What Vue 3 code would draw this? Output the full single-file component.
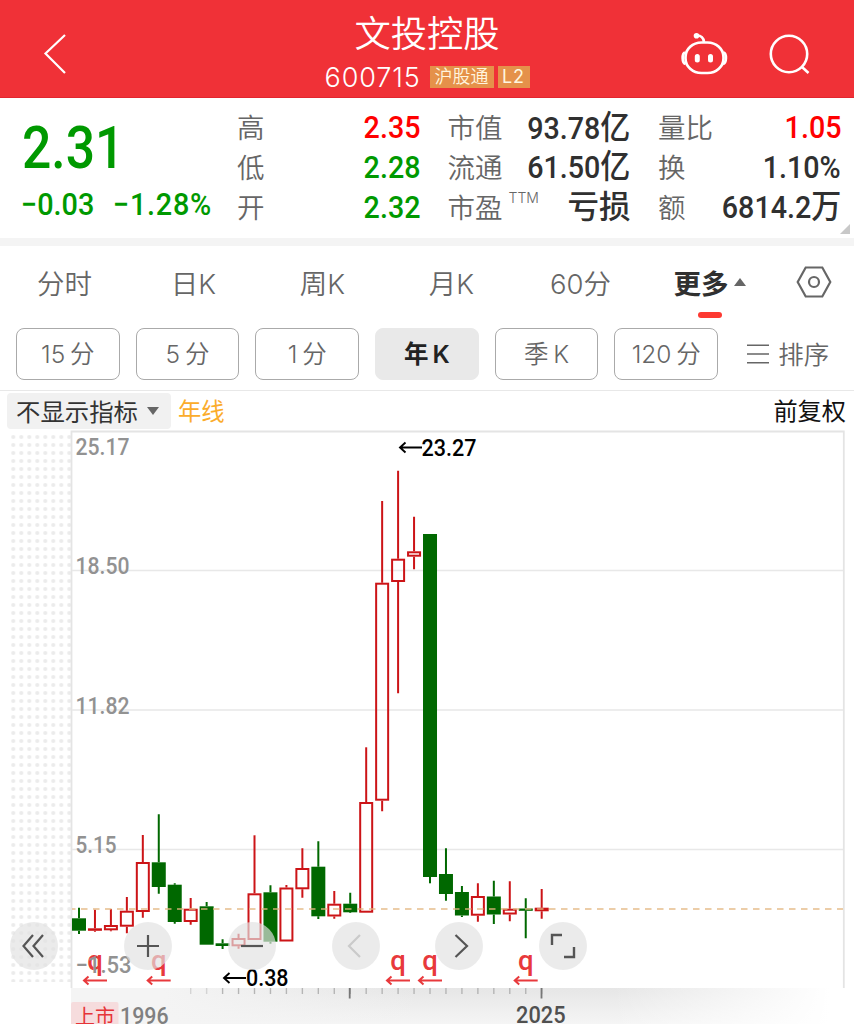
<template>
  <div class="page">
    <header class="header">
      <svg class="icon-back" viewBox="0 0 24 42">
        <path d="M22 2 L2.5 20.5 L22 40" />
      </svg>
      <div class="title">
        <h1>文投控股</h1>
        <div class="code">
          <span class="code-number">600715</span>
          <span class="badge">沪股通</span>
          <span class="badge badge-l2">L2</span>
        </div>
      </div>
      <div class="header-icons">
        <svg class="icon-robot" viewBox="0 0 48 44">
          <rect x="5.500" y="10.500" width="38" height="30.500" rx="16" ry="14.500" />
          <path d="M5 20.500 C1.800 21.500 1.800 31 5.500 32 M43.500 20.500 C46.800 21.500 46.800 31 43 32" />
          <path d="M17 3.500 C21 3.500 23.500 6 24 10" />
          <circle class="solid" cx="16.500" cy="3.700" r="2.800" />
          <path class="eyes" d="M17.300 24.500 V28 M30.500 24.500 V28" />
        </svg>
        <svg class="icon-search" viewBox="0 0 42 42">
          <circle cx="20" cy="20" r="18.200" />
          <path d="M33 33 L39.500 39" />
        </svg>
      </div>
    </header>

    <section class="quote">
      <div class="quote-main">
        <div class="price">2.31</div>
        <div class="change">
          <span>−0.03</span>
          <span class="percent">−1.28%</span>
        </div>
      </div>
      <div class="quote-grid">
        <div class="quote-item" v-for="item in quotes" :key="item.label">
          <span class="label">{{ item.label }}<sup v-if="item.sup">{{ item.sup }}</sup></span>
          <span class="value" :class="item.type">{{ item.value }}<i v-if="item.unit">{{ item.unit }}</i></span>
        </div>
      </div>
      <span class="corner"></span>
    </section>

    <nav class="tabs">
      <span class="tab" v-for="tab in tabs" :key="tab">{{ tab }}</span>
      <span class="tab active">更多<i class="arrow-up"></i></span>
      <svg class="icon-setting" viewBox="0 0 36 32">
        <path d="M9.700 1.500 H26.300 L34.300 16 L26.300 30.500 H9.700 L1.700 16 Z" />
        <circle cx="18" cy="16" r="5" />
      </svg>
    </nav>

    <div class="periods">
      <button v-for="period in periods" :key="period" class="period" :class="{ selected: period === current }"
        @click="current = period">{{ period }}</button>
      <div class="sort">
        <svg viewBox="0 0 22 20">
          <path d="M0 1.200 H22 M0 10 H22 M0 18.800 H22" />
        </svg>
        <span>排序</span>
      </div>
    </div>

    <div class="indicator">
      <div class="indicator-select">不显示指标<i class="arrow-down"></i></div>
      <span class="line-name">年线</span>
      <span class="adjust">前复权</span>
    </div>

    <div class="chart">
      <svg class="chart-svg" viewBox="0 430 854 594">
        <defs>
          <pattern id="dots" x="9.300" y="433" width="8" height="8" patternUnits="userSpaceOnUse">
            <circle cx="4" cy="4" r="2" fill="#ebebeb" />
          </pattern>
          <linearGradient id="axisDown" x1="0" y1="0" x2="0" y2="1">
            <stop offset="0" stop-color="#e6e6e6" />
            <stop offset="1" stop-color="#f5f5f5" />
          </linearGradient>
          <linearGradient id="axisLeft" x1="0" y1="0" x2="1" y2="0">
            <stop offset="0" stop-color="#f4f4f4" />
            <stop offset="0.120" stop-color="#f4f4f4" />
            <stop offset="0.450" stop-color="#f4f4f4" stop-opacity="0" />
            <stop offset="0.700" stop-color="#fff" stop-opacity="0" />
            <stop offset="0.980" stop-color="#fff" />
          </linearGradient>
        </defs>

        <rect x="9" y="433" width="62" height="549" fill="url(#dots)" />
        <rect x="71" y="988" width="773" height="36" fill="url(#axisDown)" />
        <rect x="71" y="988" width="774" height="36" fill="url(#axisLeft)" />

        <!-- grid -->
        <path class="frame" d="M71.500 988 V431.500 H843.800 V988" />
        <path class="grid" d="M72 570.500 H843 M72 710 H843 M72 849.500 H843" />

        <!-- candles -->
        <g v-for="(c, i) in candles" :key="i" :class="c[0] ? 'rise' : 'fall'">
          <path :d="wick(c, i)" />
          <rect :x="centerX(i) - (c[0] ? 6 : 7)" :y="c[0] ? c[2] + 1 : c[2]" :width="c[0] ? 12 : 14"
            :height="c[0] ? Math.max(c[3] - c[2] - 2, 0.5) : c[3] - c[2]" />
        </g>
        <path class="current" d="M72 909 H843" />

        <g v-for="x in dividends" :key="x" class="dividend">
          <text :x="x" y="970">q</text>
          <path :d="`M${x + 12} 980.500 H${x - 11} M${x - 6.500} 976.500 L${x - 11} 980.500 L${x - 6.500} 984.500`" />
        </g>

        <text v-for="p in prices" :key="p.text" class="scale" x="75.500" :y="p.y" :textLength="p.width"
          lengthAdjust="spacingAndGlyphs">{{ p.text }}</text>

        <g class="extreme">
          <path d="M422 447.500 H400 M405.500 442.500 L400 447.500 L405.500 452.500" />
          <text x="421.500" y="456" textLength="55" lengthAdjust="spacingAndGlyphs">23.27</text>
          <path d="M246 978 H224 M229.500 973 L224 978 L229.500 983" />
          <text x="246" y="986.300" textLength="42.500" lengthAdjust="spacingAndGlyphs">0.38</text>
        </g>

        <path v-for="n in 23" :key="n" class="tick" :class="{ light: n < 3 }"
          :d="`M${centerX(n + 6)} 988 v6`" />
        <path class="tick-major" d="M349.700 988 v10.500 M541.500 988 v10.500" />

        <rect x="71" y="1002" width="47.500" height="26" rx="2" fill="#f6dcdd" />
        <text class="listed" x="75" y="1024">上市</text>
        <text class="year" x="120" y="1023.500" textLength="48.500" lengthAdjust="spacingAndGlyphs">1996</text>
        <text class="year last" x="516" y="1023" textLength="49.500" lengthAdjust="spacingAndGlyphs">2025</text>
      </svg>

      <div class="tools">
        <button v-for="tool in tools" :key="tool.name" class="tool" :class="tool.name">
          <svg viewBox="0 0 48 48">
            <path :d="tool.path" />
          </svg>
        </button>
      </div>
    </div>
  </div>
</template>

<script setup>
import { ref } from 'vue'

const current = ref('年 K')

const tabs = ['分时', '日K', '周K', '月K', '60分']
const periods = ['15 分', '5 分', '1 分', '年 K', '季 K', '120 分']

const quotes = [
  { label: '高', value: '2.35', type: 'red' },
  { label: '市值', value: '93.78', unit: '亿' },
  { label: '量比', value: '1.05', type: 'red' },
  { label: '低', value: '2.28', type: 'green' },
  { label: '流通', value: '61.50', unit: '亿' },
  { label: '换', value: '1.10%' },
  { label: '开', value: '2.32', type: 'green' },
  { label: '市盈', sup: 'TTM', value: '亏损', type: 'cn' },
  { label: '额', value: '6814.2', unit: '万' }
]

// [rise, high, body top, body bottom, low]
const candles = [
  [0, 907.7, 918.3, 930.7, 934],
  [1, 909.7, 928.3, 930.8, 931.7],
  [1, 909, 925, 930.3, 931.3],
  [1, 897, 910.7, 926.7, 933.3],
  [1, 835, 862, 912, 917.7],
  [0, 814.3, 862.3, 887, 893.7],
  [0, 883.3, 884.7, 922, 923.7],
  [1, 898, 908.7, 922, 924.7],
  [0, 902, 906.3, 944.7, 944.7],
  [0, 939.3, 943.3, 946, 949],
  [1, 933.7, 938, 946.3, 948.7],
  [1, 835.3, 893.3, 940, 940],
  [0, 885.3, 892.3, 941.7, 943.7],
  [1, 885, 887.5, 941.5, 941],
  [1, 848.3, 868, 889.3, 897.7],
  [0, 841.3, 866.7, 916.3, 919],
  [1, 891, 903.7, 916.5, 918.7],
  [0, 892.7, 903.7, 912.3, 913],
  [1, 747.3, 802, 912.7, 912.7],
  [1, 501, 582.7, 800.7, 811.3],
  [1, 470.7, 558.7, 582, 693.3],
  [1, 516.7, 551.3, 556.7, 569.3],
  [0, 534, 534, 877, 883.3],
  [0, 848.3, 874, 894, 900.7],
  [0, 886, 892, 915.5, 917],
  [1, 883.3, 896, 915.7, 921.7],
  [0, 880.7, 896.5, 914.5, 924],
  [1, 881.3, 908.7, 914.5, 921.3],
  [0, 898.3, 908.5, 910.8, 938.3],
  [1, 889, 907.7, 911.3, 918.7]
]

const prices = [
  { text: '25.17', y: 454.5, width: 54 },
  { text: '18.50', y: 574, width: 54 },
  { text: '11.82', y: 713.5, width: 54 },
  { text: '5.15', y: 853, width: 41 },
  { text: '−1.53', y: 972.5, width: 56 }
]

const dividends = [95, 158.7, 398, 430, 525.7]

const tools = [
  { name: 'rewind', path: 'M33 13 L23.500 24 L33 35 M43 13 L33.500 24 L43 35' },
  { name: 'plus', path: 'M24 13 V35 M13 24 H35' },
  { name: 'minus', path: 'M13 24 H35' },
  { name: 'prev', path: 'M28 13 L17 24 L28 35' },
  { name: 'next', path: 'M20.500 13 L32 24 L20.500 35' },
  { name: 'full', path: 'M13 23 V13 H23 M25 35 H35 V25' }
]

const centerX = (i) => 79 + i * 15.955

const wick = (c, i) => {
  const x = centerX(i)
  return `M${x} ${c[1]} V${c[2]} M${x} ${c[3]} V${Math.max(c[4], c[3])}`
}
</script>

<style>
body {
  margin: 0;
  background: #fff;
}
</style>

<style scoped>
.page {
  width: 854px;
  height: 1024px;
  overflow: hidden;
  background: #fff;
  font-family: Inter, 'Noto Sans CJK SC', sans-serif;
  color: #666;
}

svg {
  display: block;
  fill: none;
}

i {
  font-style: normal;
}

button {
  font-family: inherit;
  padding: 0;
  cursor: pointer;
}

/* HEADER */
.header {
  height: 98px;
  background: #f03137;
  box-sizing: border-box;
  border-bottom: 1px solid #e2262f;
  display: grid;
  grid-template-columns: 180px 1fr 180px;
  color: #fff;
}

.header svg {
  stroke: #fff;
  stroke-width: 2.2;
}

.icon-back {
  width: 24px;
  height: 42px;
  margin: 33px 0 0 43px;
}

.title {
  display: flex;
  flex-direction: column;
  align-items: center;
}

h1 {
  margin: 14px 0 0;
  font-size: 36.300px;
  line-height: 40px;
  font-weight: 350;
}

.code {
  display: flex;
  align-items: center;
  height: 26px;
  margin-top: 10px;
  gap: 4px;
}

.code-number {
  font-size: 27px;
  font-weight: 350;
  letter-spacing: 0.900px;
  margin-right: 5px;
  width: 96px;
}

.badge {
  width: 64px;
  height: 22px;
  line-height: 21px;
  background: #e5914a;
  color: #fff5df;
  font-size: 18px;
  font-weight: 350;
  text-align: center;
}

.badge-l2 {
  width: 32px;
  font-weight: 400;
  letter-spacing: 1px;
}

.header-icons {
  display: flex;
}

.icon-robot {
  width: 48px;
  height: 44px;
  margin: 32px 0 0 6px;
}

.header .icon-robot {
  stroke-width: 2.700;
}

.header .icon-robot .eyes {
  stroke-width: 5;
  stroke-linecap: round;
}

.header .icon-robot .solid {
  fill: #fff;
  stroke: none;
}

.icon-search {
  width: 42px;
  height: 42px;
  margin: 34px 0 0 41px;
}

.header .icon-search {
  stroke-width: 2.600;
}

/* QUOTE */
.quote {
  position: relative;
  height: 140px;
  display: flex;
  border-bottom: 8px solid #f4f4f4;
}

.quote-main {
  width: 237px;
  font-family: Roboto, sans-serif;
  color: #090;
  white-space: nowrap;
}

.price {
  width: 118px;
  margin: 15px 0 0 22px;
  font-size: 60px;
  line-height: 70px;
  font-weight: 500;
  transform: scaleX(0.86);
  transform-origin: left;
}

.change {
  display: flex;
  gap: 20px;
  margin: 3px 0 0 21px;
  font-size: 31px;
  line-height: 38px;
  font-weight: 500;
  transform: scaleX(0.93);
  transform-origin: left;
}

.percent {
  letter-spacing: 0.800px;
}

.quote-grid {
  width: 604px;
  height: 120px;
  margin-top: 10px;
  display: grid;
  grid-template-columns: 183px 183px 183px;
  grid-template-rows: repeat(3, 39.800px);
  column-gap: 27.500px;
}

.quote-item {
  display: flex;
  justify-content: space-between;
  align-items: center;
  line-height: 39.800px;
  white-space: nowrap;
}

.label {
  font-size: 27.500px;
  font-weight: 350;
  padding-top: 2px;
}

.label sup {
  display: inline-block;
  font-size: 14px;
  line-height: 14px;
  letter-spacing: 0;
  margin-left: 6px;
  vertical-align: 15px;
  width: 0;
}

.value {
  font-family: Roboto, 'Noto Sans CJK SC', sans-serif;
  font-size: 31.500px;
  font-weight: 500;
  color: #303030;
  transform: scaleX(0.91);
  transform-origin: right;
}

.value i {
  font-size: 33px;
}

.red {
  color: #f00;
}

.green {
  color: #090;
}

.cn {
  transform: none;
}

.corner {
  position: absolute;
  right: 4px;
  bottom: 4px;
  border-left: 10px solid transparent;
  border-bottom: 10px solid #c8c8c8;
}

/* TABS */
.tabs {
  height: 82px;
  display: grid;
  grid-template-columns: repeat(6, 129px) 1fr;
}

.tab {
  position: relative;
  display: flex;
  justify-content: center;
  align-items: center;
  height: 71px;
  font-size: 27.500px;
  font-weight: 350;
}

.active {
  color: #303030;
  font-weight: 700;
}

.active::after {
  content: '';
  position: absolute;
  left: 53px;
  top: 66px;
  width: 24px;
  height: 6px;
  border-radius: 3px;
  background: #fd3a32;
}

.arrow-up {
  margin-left: 5px;
  border: 6px solid transparent;
  border-top: 0;
  border-bottom: 8px solid #666;
}

.icon-setting {
  width: 36px;
  height: 32px;
  margin: 20px 0 0 22px;
  stroke: #666;
  stroke-width: 2.200;
}

/* PERIODS */
.periods {
  display: flex;
  gap: 16.100px;
  height: 63px;
  padding-left: 16px;
  border-bottom: 1px solid #e8e8e8;
  box-sizing: border-box;
}

.period {
  width: 103.600px;
  height: 52px;
  box-sizing: border-box;
  border: 1px solid #aaa;
  border-radius: 8px;
  background: #fff;
  color: #666;
  font-size: 24.500px;
  font-weight: 350;
  word-spacing: -2px;
  padding-bottom: 3px;
}

.selected {
  border-color: #e9e9e9;
  background: #e9e9e9;
  color: #222;
  font-weight: 600;
}

.sort {
  display: flex;
  align-items: center;
  height: 52px;
  margin-left: 13px;
  gap: 9px;
  font-size: 25.500px;
  font-weight: 350;
}

.sort span {
  padding-bottom: 4px;
}

.sort svg {
  width: 22px;
  height: 20px;
  stroke: #666;
  stroke-width: 1.600;
}

/* INDICATOR */
.indicator {
  display: flex;
  align-items: center;
  height: 39px;
  padding: 0 8px 2px 7px;
  box-sizing: border-box;
}

.indicator-select {
  display: flex;
  align-items: center;
  width: 164px;
  height: 36px;
  box-sizing: border-box;
  padding: 0 0 2px 9px;
  margin-top: 3px;
  border-radius: 4px;
  background: #f1f1f1;
  color: #333;
  font-size: 24.400px;
}

.arrow-down {
  margin: 2px 0 0 9px;
  border: 6px solid transparent;
  border-bottom: 0;
  border-top: 8px solid #666;
}

.line-name {
  margin-left: 7px;
  font-size: 23.300px;
  color: #fbac2b;
}

.adjust {
  margin-left: auto;
  font-size: 24.200px;
  color: #111;
}

/* CHART */
.chart {
  position: relative;
  height: 594px;
}

.chart-svg {
  width: 854px;
  height: 594px;
  font-family: Roboto, 'Noto Sans CJK SC', sans-serif;
}

.frame {
  stroke: #e4e4e4;
  stroke-width: 1.800;
}

.grid {
  stroke: #e8e8e8;
  stroke-width: 1.300;
}

.rise {
  stroke: #cc1417;
  stroke-width: 2;
}

.fall {
  fill: #006800;
}

.fall path {
  stroke: #006800;
  stroke-width: 2;
}

.current {
  stroke: #e3b680;
  stroke-opacity: 0.9;
  stroke-width: 1.700;
  stroke-dasharray: 6.500 5.500;
  stroke-dashoffset: 3;
}

.scale {
  fill: #929292;
  font-size: 24px;
  font-weight: 500;
}

.dividend text {
  fill: #e8393c;
  font-size: 27.500px;
  font-weight: 500;
  text-anchor: middle;
}

.dividend path {
  stroke: #e8393c;
  stroke-width: 2;
}

.extreme text {
  fill: #000;
  font-size: 23.500px;
  font-weight: 500;
}

.extreme path {
  stroke: #000;
  stroke-width: 1.900;
}

.tick {
  stroke: #b5b5b5;
  stroke-width: 1.400;
}

.light {
  opacity: 0.500;
}

.tick-major {
  stroke: #777;
  stroke-width: 1.800;
}

.listed {
  fill: #e63438;
  font-size: 20px;
}

.year {
  fill: #808080;
  font-size: 24px;
  font-weight: 500;
}

.last {
  fill: #505050;
}

.tools {
  position: absolute;
  left: 10px;
  top: 491.500px;
  display: flex;
  gap: 55.700px;
}

.tool {
  width: 48px;
  height: 48px;
  border: none;
  border-radius: 50%;
  background: rgba(226, 226, 226, 0.68);
}

.tool svg {
  width: 48px;
  height: 48px;
  stroke: #555;
  stroke-width: 2.200;
}

.rewind {
  margin-right: 10.500px;
}

.rewind svg {
  margin-left: -10px;
}

.prev svg {
  stroke: #cacaca;
}

.full svg {
  stroke-width: 2.400;
}
</style>
